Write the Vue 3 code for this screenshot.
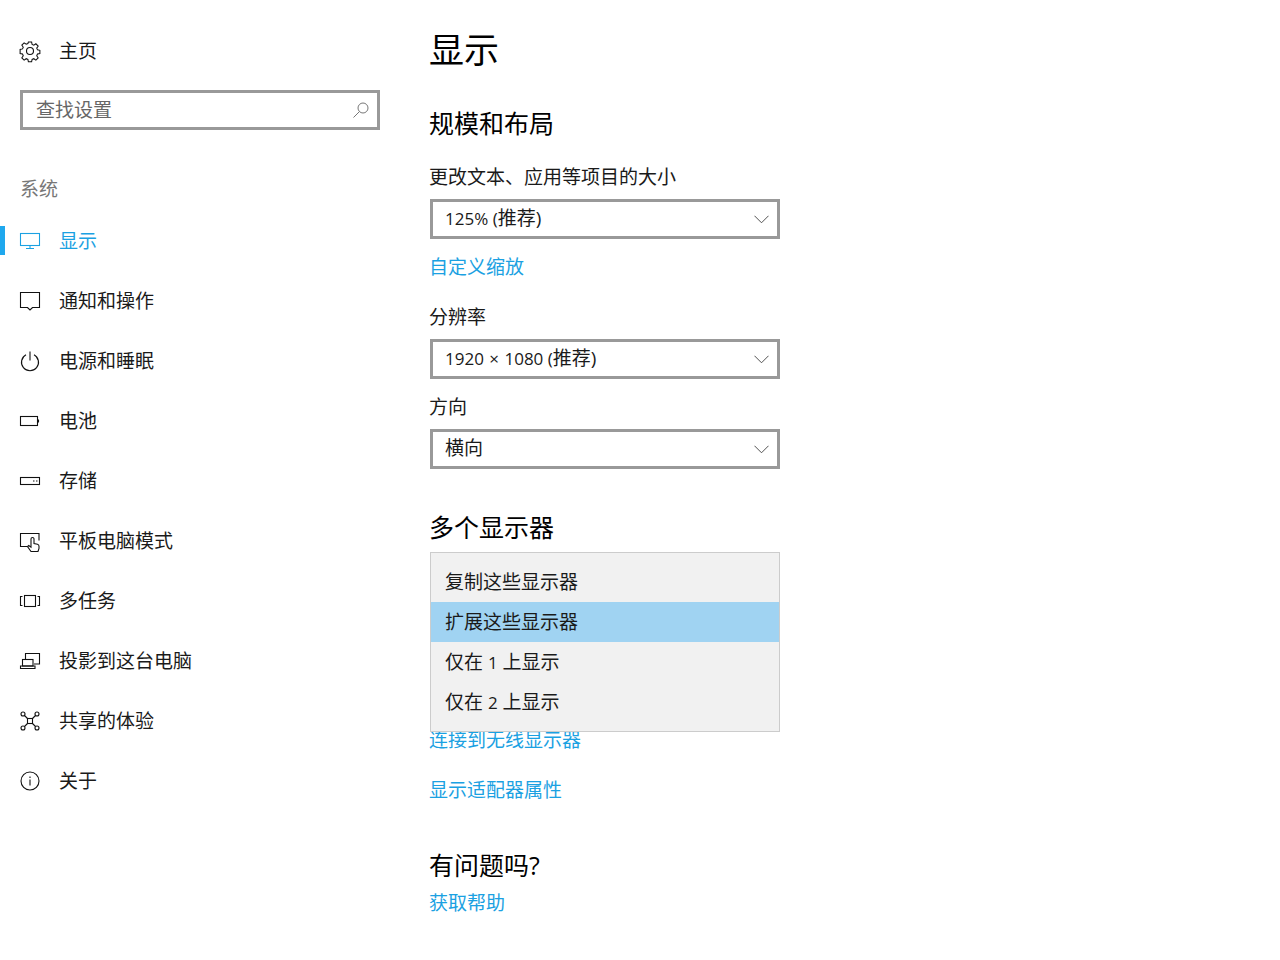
<script setup>
const navItems = [
  { label: '显示', icon: 'display', active: true },
  { label: '通知和操作', icon: 'notify' },
  { label: '电源和睡眠', icon: 'power' },
  { label: '电池', icon: 'battery' },
  { label: '存储', icon: 'storage' },
  { label: '平板电脑模式', icon: 'tablet' },
  { label: '多任务', icon: 'multitask' },
  { label: '投影到这台电脑', icon: 'project' },
  { label: '共享的体验', icon: 'share' },
  { label: '关于', icon: 'about' },
]
</script>

<template>
  <div class="page">
    <aside class="sidebar">
      <div class="home">
        <svg class="icon" viewBox="0 0 20 20">
          <circle cx="10" cy="10" r="3.500" />
          <path d="M8.300 .6h3.400l.5 2.500 1.800.8 2.200-1.500 2.400 2.400-1.500 2.200.8 1.800 2.500.5v3.400l-2.500.5-.8 1.800 1.500 2.200-2.400 2.400-2.200-1.500-1.800.8-.5 2.500H8.300l-.5-2.500-1.800-.8-2.200 1.500-2.400-2.400 1.500-2.200-.8-1.800-2.500-.5V8.300l2.500-.5.800-1.800-1.500-2.200 2.400-2.400 2.200 1.500 1.800-.8z" transform="translate(.5 .5) scale(.95)" />
        </svg>
        <span>主页</span>
      </div>

      <div class="search">
        <span>查找设置</span>
        <svg class="search-icon" viewBox="0 0 16 16">
          <circle cx="10" cy="6" r="5" />
          <path d="M6.500 9.500L.5 15.500" />
        </svg>
      </div>

      <div class="group-title">系统</div>

      <nav>
        <div v-for="item in navItems" :key="item.label" class="nav-item" :class="{ active: item.active }">
          <svg class="icon" viewBox="0 0 20 20">
            <g v-if="item.icon === 'display'">
              <rect x=".5" y="2.500" width="19" height="12" />
              <path d="M10 14.500v3M6 17.500h8" />
            </g>
            <path v-else-if="item.icon === 'notify'" d="M.5 1.500h19v15h-7l-2.500 2.500L7.500 16.500h-7z" />
            <g v-else-if="item.icon === 'power'">
              <path d="M6 3.800a8.500 8.500 0 1 0 8 0" />
              <path d="M10 .5v9" />
            </g>
            <g v-else-if="item.icon === 'battery'">
              <rect x=".5" y="5.500" width="17" height="9" />
              <path d="M18.500 8.500v3" />
            </g>
            <g v-else-if="item.icon === 'storage'">
              <rect x=".5" y="6.500" width="19" height="7" />
              <path d="M13 10h1.500M16 10h1.500" />
            </g>
            <g v-else-if="item.icon === 'tablet'">
              <path d="M7 15.500H.5V2.500h18.500v7" />
              <path d="M11 20.500l-3.500-5 1.200-1 2.300 1.700V8a1.500 1.500 0 0 1 3 0v4.500l3.500.8a2 2 0 0 1 1.500 2v2.200l-1 3z" />
            </g>
            <g v-else-if="item.icon === 'multitask'">
              <rect x="4.500" y="4.500" width="11" height="11" />
              <path d="M2.500 5.500h-2v9h2M17.500 5.500h2v9h-2" />
            </g>
            <g v-else-if="item.icon === 'project'">
              <path d="M5.500 8V2.500h14v10.500H14" />
              <rect x="2.500" y="8.500" width="10.500" height="6.500" />
              <path d="M.5 17.500h14.500v-2.500H.5z" />
            </g>
            <g v-else-if="item.icon === 'share'">
              <rect x="7.500" y="7.500" width="5" height="5" />
              <circle cx="3" cy="3" r="2" />
              <circle cx="17" cy="3" r="2" />
              <circle cx="3" cy="17" r="2" />
              <circle cx="17" cy="17" r="2" />
              <path d="M4.500 4.500l3 3M15.500 4.500l-3 3M4.500 15.500l3-3M15.500 15.500l-3-3" />
            </g>
            <g v-else-if="item.icon === 'about'">
              <circle cx="10" cy="10" r="9" />
              <path d="M10 8.500v6M10 5.500v1.500" />
            </g>
          </svg>
          <span>{{ item.label }}</span>
        </div>
      </nav>
    </aside>

    <main class="content">
      <h1>显示</h1>

      <h2 class="scale-title">规模和布局</h2>
      <div class="label">更改文本、应用等项目的大小</div>
      <div class="select">
        <span><span class="num">125% (</span>推荐)</span>
        <svg class="chevron" viewBox="0 0 16 9"><path d="M.5 .5L8 8 15.500 .5" /></svg>
      </div>
      <a class="link custom-link">自定义缩放</a>

      <div class="label res-label">分辨率</div>
      <div class="select">
        <span><span class="num">1920<span class="times"> × </span>1080 (</span>推荐)</span>
        <svg class="chevron" viewBox="0 0 16 9"><path d="M.5 .5L8 8 15.500 .5" /></svg>
      </div>

      <div class="label dir-label">方向</div>
      <div class="select">
        <span>横向</span>
        <svg class="chevron" viewBox="0 0 16 9"><path d="M.5 .5L8 8 15.500 .5" /></svg>
      </div>

      <h2 class="multi-title">多个显示器</h2>
      <div class="multi">
        <div class="popup">
          <div class="option">复制这些显示器</div>
          <div class="option selected">扩展这些显示器</div>
          <div class="option">仅在 <span class="num">1</span> 上显示</div>
          <div class="option">仅在 <span class="num">2</span> 上显示</div>
        </div>
      </div>
      <a class="link wireless-link">连接到无线显示器</a>
      <a class="link adapter-link">显示适配器属性</a>

      <h2 class="help-title">有问题吗?</h2>
      <a class="link help-link">获取帮助</a>
    </main>
  </div>
</template>

<style>
body {
  background: #fff;
}
</style>

<style scoped>
.page {
  display: flex;
  width: 1280px;
  height: 960px;
  overflow: hidden;
  background: #fff;
  color: #1a1a1a;
  font-family: "Open Sans", "Noto Sans CJK SC", sans-serif;
  font-size: 19px;
  font-weight: 400;
}
.num {
  font-size: 17px;
}
.times {
  margin: 0 1px;
}
.sidebar {
  width: 430px;
  flex: none;
  padding-top: 31px;
  box-sizing: border-box;
}
.icon {
  width: 20px;
  height: 20px;
  flex: none;
  margin-right: 19px;
  overflow: visible;
  fill: none;
  stroke: #111;
  stroke-width: 1.100;
}
.home,
.nav-item {
  display: flex;
  align-items: center;
  height: 40px;
  padding-left: 20px;
}
.home span,
.nav-item span,
.search span {
  margin-top: -2px;
}
.nav-item {
  height: 60px;
  position: relative;
}
.search {
  display: flex;
  align-items: center;
  justify-content: space-between;
  box-sizing: border-box;
  width: 360px;
  height: 40px;
  margin: 19px 0 0 20px;
  padding: 0 8px 0 13px;
  border: 3px solid #999;
  color: #666;
}
.search-icon {
  width: 16px;
  height: 16px;
  fill: none;
  stroke: #777;
  stroke-width: 1;
}
.group-title {
  margin: 40px 0 0 20px;
  height: 38px;
  line-height: 38px;
  color: #777;
}
nav {
  margin-top: 3px;
}
.nav-item.active {
  color: #1ba1e2;
}
.nav-item.active .icon {
  stroke: #1ba1e2;
}
.nav-item.active::before {
  content: "";
  position: absolute;
  left: 0;
  top: 15px;
  width: 5px;
  height: 29px;
  background: #1fa8ee;
}
.content {
  flex: 1;
  padding-top: 25px;
}
h1,
h2,
.label,
.link {
  margin-left: -1px;
}
h1 {
  margin-top: 0;
  margin-bottom: 0;
  height: 50px;
  line-height: 50px;
  font-size: 35px;
  font-weight: 400;
  color: #000;
}
h2 {
  margin-top: 0;
  margin-bottom: 0;
  height: 36px;
  line-height: 36px;
  font-size: 25px;
  font-weight: 400;
  color: #000;
}
.scale-title {
  margin-top: 30px;
}
.label {
  height: 30px;
  line-height: 30px;
}
.scale-title + .label {
  margin-top: 21px;
}
.select {
  display: flex;
  align-items: center;
  justify-content: space-between;
  box-sizing: border-box;
  width: 350px;
  height: 40px;
  margin-top: 7px;
  padding: 0 8px 0 12px;
  border: 3px solid #999;
}
.select > span {
  margin-top: -4px;
}
.chevron {
  width: 15px;
  height: 9px;
  fill: none;
  stroke: #444;
  stroke-width: 1;
}
.link {
  display: block;
  height: 30px;
  line-height: 30px;
  color: #1ba1e2;
}
.custom-link {
  margin-top: 13px;
}
.res-label {
  margin-top: 20px;
}
.dir-label {
  margin-top: 13px;
}
.multi-title {
  margin-top: 40px;
}
.multi {
  position: relative;
  height: 172px;
  margin-top: 7px;
}
.popup {
  position: absolute;
  left: 0;
  top: 0;
  box-sizing: border-box;
  width: 350px;
  height: 180px;
  padding-top: 9px;
  background: #f1f1f1;
  border: 1px solid #ccc;
}
.option {
  height: 40px;
  line-height: 40px;
  padding-left: 14px;
}
.option.selected {
  background: #a0d3f2;
}
.wireless-link {
  margin-top: 1px;
}
.adapter-link {
  margin-top: 20px;
}
.help-title {
  margin-top: 42px;
}
.help-link {
  margin-top: 5px;
}
</style>
